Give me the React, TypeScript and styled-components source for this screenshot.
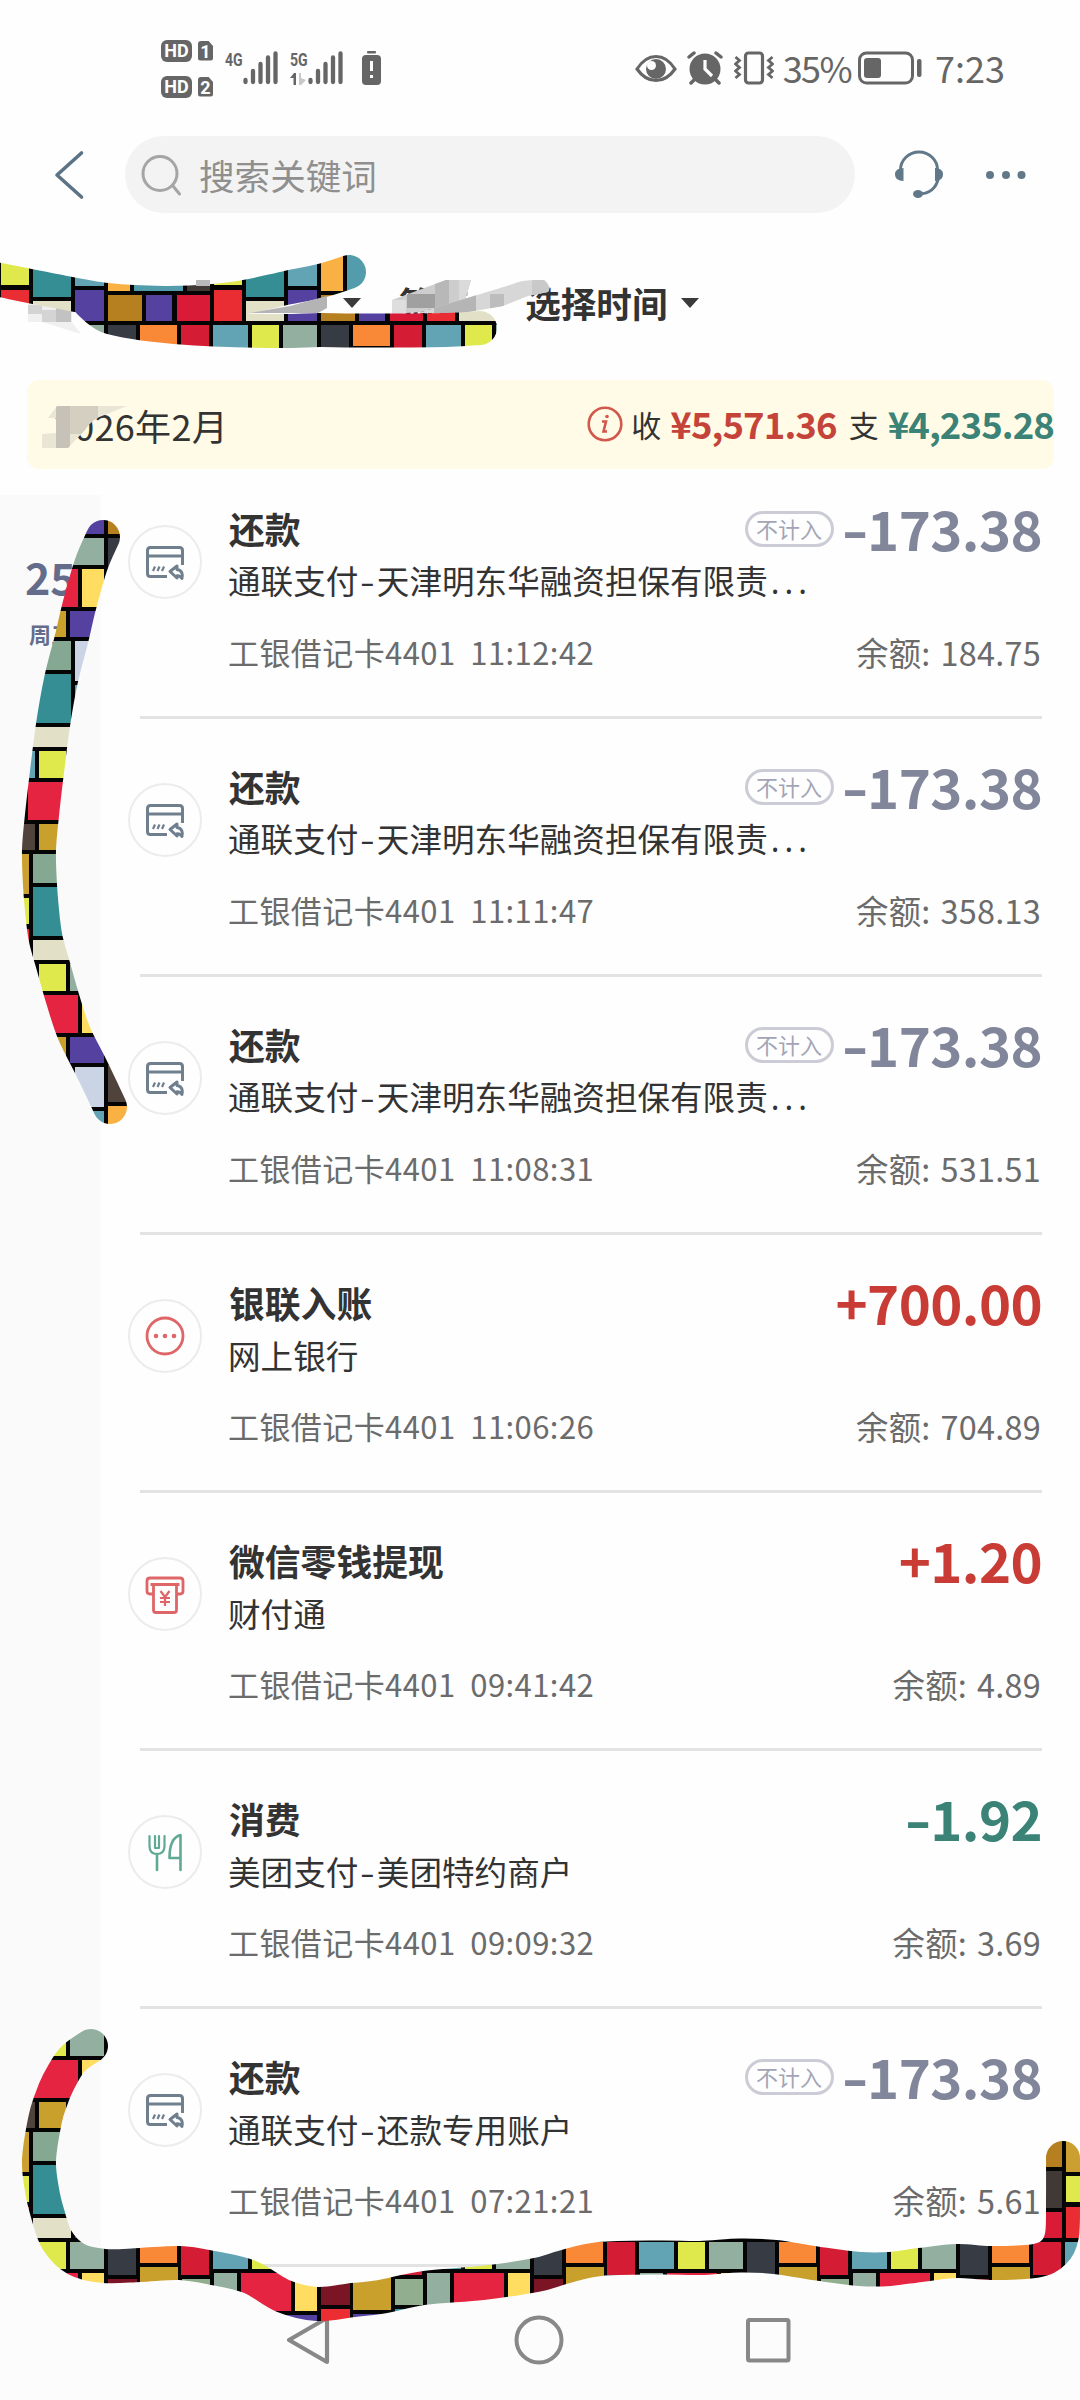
import React from "react";
import styled, { createGlobalStyle } from "styled-components";

const GlobalStyle = createGlobalStyle`
  body { margin: 0; background: #fefefe; }
  * { box-sizing: border-box; }
  svg { display: block; flex: none; }
`;

const Page = styled.div`
  position: relative;
  width: 1080px;
  height: 2400px;
  overflow: hidden;
  display: flex;
  flex-direction: column;
  background: #fefefe;
  color: #333;
  font-family: "Noto Sans CJK SC", "Noto Sans", sans-serif;
  white-space: nowrap;
`;

/* ---------- status bar ---------- */
const StatusBar = styled.header`
  height: 136px;
  padding: 0 76px 0 161px;
  display: flex;
  align-items: center;
  justify-content: space-between;
  color: #666;
`;
const StatusGroup = styled.div`
  display: flex;
  align-items: center;
`;
const HdColumn = styled.div`
  display: grid;
  gap: 14px;
  margin-right: 12px;
  margin-top: 1px;
`;
const HdRow = styled.div`
  display: flex;
  align-items: center;
  gap: 6px;
`;
const HdBadge = styled.span`
  width: 31px;
  height: 22px;
  border-radius: 6px;
  background: #666;
  color: #fff;
  font: bold 18px/22px Roboto, sans-serif;
  text-align: center;
`;
const SimBadge = styled.span`
  width: 15px;
  height: 20px;
  background: #666;
  color: #fff;
  font: bold 18px/21px Roboto, sans-serif;
  text-align: center;
  border-radius: 3px;
  clip-path: polygon(0 0, 68% 0, 100% 28%, 100% 100%, 0 100%);
`;
const Signal = styled.div<{ $gap: number }>`
  display: flex;
  height: 34px;
  margin-right: ${(p) => p.$gap}px;
`;
const NetLabel = styled.div`
  width: 18px;
  height: 34px;
  display: flex;
  flex-direction: column;
  justify-content: space-between;
  font: bold 19px/17px Roboto, "Noto Sans CJK SC", sans-serif;
`;
const NetText = styled.span`
  display: block;
  transform: scaleX(0.74);
  transform-origin: 0 0;
`;
const StatusText = styled.span<{ $left: number; $right: number; $track: number }>`
  font-size: 36px;
  line-height: 50px;
  letter-spacing: ${(p) => p.$track}px;
  margin: -2px ${(p) => p.$right}px 0 ${(p) => p.$left}px;
`;

/* ---------- search row ---------- */
const SearchRow = styled.div`
  height: 77px;
  padding: 0 53px 0 52px;
  display: flex;
  align-items: center;
`;
const SearchBox = styled.div`
  width: 730px;
  height: 77px;
  margin: 0 39px 0 39px;
  padding-left: 16px;
  border-radius: 39px;
  background: #f3f3f3;
  display: flex;
  align-items: center;
  gap: 16px;
  font-size: 35.6px;
  color: #8f8f8f;
`;

/* ---------- filters ---------- */
const Filters = styled.nav`
  height: 167px;
  padding: 56px 0 0 343px;
  display: flex;
  align-items: flex-start;
`;
const Filter = styled.div<{ $right: number }>`
  display: flex;
  align-items: center;
  gap: 14px;
  height: 66px;
  margin-right: ${(p) => p.$right}px;
  font-size: 35.6px;
  font-weight: 700;
`;
const Caret = styled.i`
  width: 0;
  height: 0;
  margin-top: 2px;
  border: solid transparent;
  border-width: 10px 9px 0;
  border-top-color: #3a3a3a;
`;

/* ---------- monthly summary ---------- */
const Summary = styled.section`
  height: 89px;
  margin-left: 27px;
  width: 1027px;
  padding-left: 27px;
  border-radius: 12px;
  background: #fffbe6;
  display: flex;
  align-items: center;
  justify-content: space-between;
`;
const Month = styled.span`
  font-size: 36px;
  letter-spacing: 0.3px;
`;
const Totals = styled.div`
  display: flex;
  align-items: center;
  margin-top: -1px;
`;
const TotalLabel = styled.span`
  font-size: 30px;
  margin: 0 9px 0 8px;
`;
const Total = styled.b<{ $color: string; $right?: number }>`
  font-size: 36.5px;
  line-height: 50px;
  letter-spacing: -0.9px;
  margin-right: ${(p) => p.$right ?? 0}px;
  color: ${(p) => p.$color};
`;

/* ---------- transactions ---------- */
const Body = styled.main`
  height: 1811px;
  display: flex;
`;
const DayColumn = styled.aside`
  width: 101px;
  margin-top: 26px;
  padding: 54px 0 0 25px;
  background: #fafafa;
  color: #646c8b;
  font-weight: 700;
`;
const Day = styled.div`
  font-size: 43px;
  line-height: 54px;
`;
const Weekday = styled.div`
  font-size: 22px;
  line-height: 32px;
  margin: 14px 0 0 4px;
`;
const List = styled.div`
  flex: 1;
  margin-top: -8px;
  padding: 0 39px 0 27px;
`;
const Row = styled.article`
  position: relative;
  height: 258px;
  display: flex;
`;
const Divider = styled.div`
  position: absolute;
  left: 12px;
  right: -1px;
  bottom: 0;
  height: 3px;
  background: #e3e3e3;
`;
const IconRing = styled.div`
  width: 74px;
  height: 74px;
  margin: 64px 26px 0 0;
  border: 2.5px solid #ececec;
  border-radius: 50%;
  display: grid;
  place-items: center;
  flex: none;
`;
const Details = styled.div`
  flex: 1;
  display: flex;
  flex-direction: column;
`;
const Line = styled.div<{ $top: number; $height: number }>`
  display: flex;
  justify-content: space-between;
  align-items: center;
  margin-top: ${(p) => p.$top}px;
  height: ${(p) => p.$height}px;
`;
const Title = styled.h3`
  margin: 0 0 0 1px;
  font-size: 35.8px;
  font-weight: 700;
`;
const AmountBox = styled.div`
  display: flex;
  align-items: center;
  gap: 9px;
`;
const Tag = styled.span`
  width: 89px;
  height: 36px;
  margin-top: 2px;
  border: 3px solid #cbccd6;
  border-radius: 18px;
  font-size: 22px;
  line-height: 29px;
  text-align: center;
  color: #a3a5b6;
`;
const Amount = styled.b<{ $color: string }>`
  font-size: 54.5px;
  line-height: 60px;
  letter-spacing: -0.6px;
  margin-right: -1px;
  color: ${(p) => p.$color};
`;
const Sign = styled.span<{ $minus: boolean }>`
  display: inline-block;
  transform: ${(p) => (p.$minus ? "scaleX(1.35)" : "none")};
  transform-origin: 50% 50%;
  margin: ${(p) => (p.$minus ? "0 3px 0 2px" : "0")};
`;
const Party = styled.span`
  font-size: 32.6px;
`;
const Dash = styled.span`
  display: inline-block;
  width: 18.5px;
  text-align: center;
  transform: scaleX(1.3);
`;
const Ellipsis = styled.span`
  font-family: "Noto Sans", sans-serif;
  letter-spacing: 5px;
  margin-left: 3px;
`;
const Account = styled.span`
  font-size: 31px;
  letter-spacing: 0.42px;
  color: #6b6b6b;
  white-space: pre;
`;
const Balance = styled.span`
  font-size: 32.4px;
  letter-spacing: 0.25px;
  word-spacing: 2.5px;
  color: #6b6b6b;
`;

/* ---------- system navigation ---------- */
const NavBar = styled.footer`
  height: 120px;
  padding-left: 284px;
  background: #fcfcfc;
  display: flex;
  align-items: center;
`;
const NavButton = styled.div<{ $right: number }>`
  margin-right: ${(p) => p.$right}px;
`;

const DoodleLayer = styled.svg`
  position: absolute;
  left: 0;
  top: 0;
  pointer-events: none;
`;

const RED = "#c83c35";
const GREEN = "#3b8277";
const GREY = "#82869a";

type IconKind = "card" | "dots" | "atm" | "food";

function RowIcon({ kind }: { kind: IconKind }) {
  if (kind === "card")
    return (
      <svg width="44" height="44" viewBox="0 0 44 44" fill="none" stroke="#6f7f8e" strokeWidth="3">
        <path d="M39.500 25V10.500q0-3-3-3H7.500q-3 0-3 3v23q0 3 3 3h16.500M4.500 16h35" />
        <path d="M10 31l2-4.500M14.500 31l2-4.500M19 31l2-4.500" strokeWidth="2.200" />
        <path d="M27 31.500l7-5.500v3.500c5 .5 6 5 5 9-1.500-2.500-3-3-5-2.800V38z" strokeLinejoin="round" />
      </svg>
    );
  if (kind === "dots")
    return (
      <svg width="44" height="44" viewBox="0 0 44 44" fill="#df6668">
        <circle cx="22" cy="22" r="18" fill="none" stroke="#df6668" strokeWidth="2.800" />
        <circle cx="13" cy="22" r="2.300" />
        <circle cx="22" cy="22" r="2.300" />
        <circle cx="31" cy="22" r="2.300" />
      </svg>
    );
  if (kind === "atm")
    return (
      <svg width="44" height="44" viewBox="0 0 44 44" fill="none" stroke="#df6668" strokeWidth="2.800" strokeLinejoin="round">
        <path d="M10 22H7q-3 0-3-3V9q0-3 3-3h30q3 0 3 3v10q0 3-3 3h-3M7.500 12.500h29" />
        <path d="M10.500 13v25q0 2.500 2.500 2.500h18q2.500 0 2.500-2.500V13" />
        <path d="M17.500 19l4.500 6 4.500-6M22 25v9M17 26h10M17 30h10" strokeWidth="2.200" />
      </svg>
    );
  return (
    <svg width="44" height="44" viewBox="0 0 44 44" fill="none" stroke="#5fa995" strokeWidth="2.600" strokeLinecap="round" strokeLinejoin="round">
      <path d="M6.500 6v10q0 8 7.500 8t7.500-8V6M12 6v12h4V6" strokeWidth="2.200" />
      <path d="M14 24v16M37.500 40V5c-8 2-11 11-11 23h11" />
    </svg>
  );
}

interface Tx {
  icon: IconKind;
  title: string;
  party: string;
  more?: boolean;
  time: string;
  amount: string;
  balance: string;
  color: string;
  excluded?: boolean;
}

const LONG = "通联支付-天津明东华融资担保有限责";
const rows: Tx[] = [
  { icon: "card", title: "还款", party: LONG, more: true, time: "11:12:42", amount: "-173.38", balance: "184.75", color: GREY, excluded: true },
  { icon: "card", title: "还款", party: LONG, more: true, time: "11:11:47", amount: "-173.38", balance: "358.13", color: GREY, excluded: true },
  { icon: "card", title: "还款", party: LONG, more: true, time: "11:08:31", amount: "-173.38", balance: "531.51", color: GREY, excluded: true },
  { icon: "dots", title: "银联入账", party: "网上银行", time: "11:06:26", amount: "+700.00", balance: "704.89", color: RED },
  { icon: "atm", title: "微信零钱提现", party: "财付通", time: "09:41:42", amount: "+1.20", balance: "4.89", color: RED },
  { icon: "food", title: "消费", party: "美团支付-美团特约商户", time: "09:09:32", amount: "-1.92", balance: "3.69", color: GREEN },
  { icon: "card", title: "还款", party: "通联支付-还款专用账户", time: "07:21:21", amount: "-173.38", balance: "5.61", color: GREY, excluded: true },
];

function Transaction({ tx }: { tx: Tx }) {
  const [channel, merchant] = tx.party.split("-");
  return (
    <Row>
      <IconRing>
        <RowIcon kind={tx.icon} />
      </IconRing>
      <Details>
        <Line $top={37} $height={60}>
          <Title>{tx.title}</Title>
          <AmountBox>
            {tx.excluded && <Tag>不计入</Tag>}
            <Amount $color={tx.color}>
              <Sign $minus={tx.amount[0] === "-"}>{tx.amount[0]}</Sign>
              {tx.amount.slice(1)}
            </Amount>
          </AmountBox>
        </Line>
        <Line $top={-1} $height={46}>
          <Party>
            {channel}
            {merchant && <Dash>-</Dash>}
            {merchant}
            {tx.more && <Ellipsis>...</Ellipsis>}
          </Party>
        </Line>
        <Line $top={25} $height={46}>
          <Account>{"工银借记卡4401  " + tx.time}</Account>
          <Balance>余额: {tx.balance}</Balance>
        </Line>
      </Details>
      <Divider />
    </Row>
  );
}

function SignalBars() {
  const tops = [27, 20, 13, 6.5, 2.5];
  return (
    <svg width="35" height="34" viewBox="0 0 35 34" stroke="#666" strokeWidth="4.300" strokeLinecap="round">
      {tops.map((t, i) => (
        <path key={i} d={`M${2.5 + i * 7.5} ${t + (i === 0 ? 2 : 0)}V31`} />
      ))}
    </svg>
  );
}

/* One repeat of the mosaic brush: [x, y, width, height, colour] on a 213 px square. */
const tiles: [number, number, number, number, string][] = [
  [1, 0, 28, 33, "#373c44"], [33, 0, 37, 21, "#f98937"], [74, 0, 28, 33, "#d41c34"],
  [106, 0, 35, 27, "#62a4b4"], [145, 0, 27, 27, "#dfe94b"], [176, 0, 34, 27, "#93af9f"],
  [33, 25, 38, 43, "#c9a02b"], [1, 37, 29, 26, "#7b1425"], [75, 37, 28, 26, "#91ae8e"],
  [107, 31, 23, 38, "#93af9f"], [134, 31, 50, 38, "#e42441"], [188, 31, 22, 38, "#ffdd61"],
  [1, 67, 29, 30, "#ec2d31"], [33, 72, 38, 35, "#5541a0"], [75, 67, 28, 41, "#4296a7"],
  [107, 73, 34, 26, "#50433b"], [145, 73, 27, 26, "#c9a02b"], [176, 73, 34, 26, "#5541a0"],
  [1, 101, 32, 37, "#50433b"], [37, 111, 66, 27, "#b67f20"],
  [107, 103, 28, 40, "#cca030"], [139, 103, 38, 29, "#84a892"], [181, 103, 29, 40, "#cad4e4"],
  [1, 142, 22, 37, "#f9b144"], [27, 142, 49, 37, "#539cab"], [80, 142, 23, 37, "#403935"],
  [107, 147, 28, 26, "#dfe94b"], [139, 136, 38, 49, "#348e93"], [181, 147, 29, 27, "#62a4b4"],
  [1, 183, 34, 26, "#b67f20"], [39, 183, 26, 26, "#5541a0"], [70, 183, 33, 26, "#da1b38"],
  [107, 178, 28, 31, "#ea2d33"], [139, 189, 38, 20, "#e2e0c7"], [181, 178, 29, 31, "#5541a0"],
];

/* The brush tile starts at (107, 112); the second stroke is painted with it as well. */
function smooth(points: [number, number][]) {
  let d = `M${points[0][0]} ${points[0][1]}`;
  for (let i = 0; i < points.length - 1; i++) {
    const a = points[i - 1] ?? points[i];
    const b = points[i];
    const c = points[i + 1];
    const e = points[i + 2] ?? c;
    d += `C${b[0] + (c[0] - a[0]) / 6} ${b[1] + (c[1] - a[1]) / 6} ${c[0] - (e[0] - b[0]) / 6} ${c[1] - (e[1] - b[1]) / 6} ${c[0]} ${c[1]}`;
  }
  return d;
}

const strokes: [number, number][][] = [
  [[-20, 276], [0, 280], [50, 290], [107, 300], [164, 303], [214, 301], [250, 296], [286, 288], [320, 281], [349, 272]],
  [[90, 303], [107, 316], [139, 323], [175, 327], [214, 329.5], [280, 331], [320, 330], [357, 330.5], [446, 330], [480, 328]],
  [[103, 537], [91, 565], [79, 607], [72, 637], [61, 680], [53, 725], [46, 780], [42, 815], [39, 850], [40, 885], [43, 920], [46, 940], [53, 965], [63, 1000], [74, 1033], [91, 1067], [103, 1092], [110, 1107]],
  [[91, 2046], [72, 2060], [58, 2083], [51, 2100], [45, 2120], [39, 2160], [42, 2190], [48, 2215], [57, 2240], [76, 2259], [104, 2266], [140, 2265], [180, 2263], [213, 2268], [250, 2277], [283, 2296], [317, 2304], [353, 2300], [380, 2297], [424, 2288], [482, 2283], [536, 2275], [564, 2267], [600, 2259], [660, 2257.5], [700, 2258], [740, 2255.5], [775, 2257], [820, 2264], [860, 2269], [890, 2269], [920, 2265], [957, 2261], [990, 2263], [1035, 2261], [1054, 2252], [1062, 2235], [1063, 2200], [1063, 2158]],
];

function Doodles() {
  return (
    <DoodleLayer width="1080" height="2400" viewBox="0 0 1080 2400">
      <defs>
        <pattern id="mosaic" x="107" y="112" width="213" height="213" patternUnits="userSpaceOnUse">
          <rect width="213" height="213" fill="#050505" />
          {tiles.map(([x, y, w, h, c], i) => (
            <rect key={i} x={x} y={y} width={w} height={h} fill={c} />
          ))}
        </pattern>
        <clipPath id="smearA"><path d="M392 300L446 280h25l-6 20-44 12-29 2z" /></clipPath>
        <clipPath id="smearB"><path d="M418 313l95-29q8-4 24-4h7q8 7 4 12l-20 4-25 10-40 7z" /></clipPath>
        <clipPath id="smearC"><path d="M48 418l9-12h70l-20 8q-16 5-22 16l-17 18H42v-14l14-1V418z" /></clipPath>
      </defs>
      <g>
        <path d="M28 302h20l24 6v14l9 12-39-12H28z" fill="#f0f0f0" />
        <path d="M28 305h14v9H28z" fill="#d4d4d4" />
        <path d="M42 310h14v12H42z" fill="#d4d4d4" />
        <path d="M56 308h15v14H56z" fill="#c2c2c2" />
        <g clipPath="url(#smearA)">
          <rect x="390" y="278" width="84" height="38" fill="#cdcdcd" />
          <rect x="407" y="294" width="28" height="14" fill="#a0a0a0" />
          <rect x="435" y="280" width="14" height="34" fill="#b8b8b8" />
          <rect x="392" y="300" width="14" height="14" fill="#dedede" />
          <rect x="459" y="280" width="12" height="34" fill="#dadada" />
        </g>
        <g clipPath="url(#smearB)">
          <rect x="410" y="276" width="142" height="40" fill="#d7d7d7" />
          <rect x="434" y="294" width="42" height="20" fill="#b5b5b5" />
          <rect x="490" y="294" width="14" height="16" fill="#bdbdbd" />
          <rect x="532" y="280" width="18" height="18" fill="#c9c9c9" />
        </g>
        <g clipPath="url(#smearC)">
          <rect x="40" y="404" width="90" height="46" fill="#eae6d5" />
          <rect x="56" y="406" width="14" height="44" fill="#c6c2b8" />
          <rect x="70" y="406" width="28" height="28" fill="#d4cfc0" />
        </g>
      </g>
      {strokes.map((s, i) => (
        <path key={i} d={smooth(s)} fill="none" stroke="url(#mosaic)" strokeWidth="34" strokeLinecap="round" strokeLinejoin="round" />
      ))}
      <path d="M250 313l40-7 37-10v12l-9 5z" fill="#b4b4b4" />
      <path d="M196 280h14v6h-14z" fill="#b9b9b9" />
    </DoodleLayer>
  );
}

export default function App() {
  return (
    <Page>
      <GlobalStyle />
      <StatusBar>
        <StatusGroup>
          <HdColumn>
            <HdRow><HdBadge>HD</HdBadge><SimBadge>1</SimBadge></HdRow>
            <HdRow><HdBadge>HD</HdBadge><SimBadge>2</SimBadge></HdRow>
          </HdColumn>
          <Signal $gap={12}>
            <NetLabel><NetText>4G</NetText></NetLabel>
            <SignalBars />
          </Signal>
          <Signal $gap={19}>
            <NetLabel>
              <NetText>5G</NetText>
              <svg width="17" height="12" viewBox="0 0 17 12">
                <path d="M0 5L4 0h2v12H3.500V5z" fill="#666" />
                <path d="M9 0h2v5l5 2-5 5H9z" fill="#c8c8c8" />
              </svg>
            </NetLabel>
            <SignalBars />
          </Signal>
          <svg width="19" height="34" viewBox="0 0 19 34">
            <rect x="5" y="0" width="9" height="2.500" rx="1" fill="#666" />
            <rect x="0" y="4" width="19" height="30" rx="4" fill="#666" />
            <path d="M9.500 10v10M9.500 24v3" stroke="#fff" strokeWidth="3" />
          </svg>
        </StatusGroup>
        <StatusGroup>
          <svg width="42" height="34" viewBox="0 0 42 34">
            <path d="M2 18Q10 5.500 21 5.500T40 18Q32 29.500 21 29.500T2 18z" fill="none" stroke="#666" strokeWidth="3.200" />
            <circle cx="21" cy="18" r="10" fill="#666" />
            <circle cx="16.500" cy="14.500" r="4.500" fill="#fefefe" />
          </svg>
          <svg width="38" height="34" viewBox="0 0 38 34" style={{ marginLeft: 9 }}>
            <circle cx="19" cy="18" r="15.500" fill="#666" />
            <path d="M3 6l5-4M35 6l-5-4M5 32l4-4M33 32l-4-4" stroke="#666" strokeWidth="3.500" strokeLinecap="round" />
            <path d="M19 9v9l7 7" fill="none" stroke="#fff" strokeWidth="3.200" />
          </svg>
          <svg width="40" height="34" viewBox="0 0 40 34" fill="none" stroke="#666" strokeWidth="3.200" style={{ marginLeft: 10 }}>
            <rect x="11.500" y="2" width="17" height="30" rx="3" />
            <path d="M1.500 6l4 3.500-4 3.500 4 3.500-4 3.500 4 3.500-4 3.500M38.500 6l-4 3.500 4 3.500-4 3.500 4 3.500-4 3.500 4 3.500" strokeWidth="2.800" />
          </svg>
          <StatusText $left={9} $right={7} $track={-1.6}>35%</StatusText>
          <svg width="64" height="34" viewBox="0 0 64 34">
            <rect x="1.500" y="2" width="53" height="30" rx="7" fill="none" stroke="#666" strokeWidth="3" />
            <rect x="6" y="7" width="17" height="20" rx="3" fill="#666" />
            <rect x="59" y="8" width="4.500" height="18" rx="2" fill="#666" />
          </svg>
          <StatusText $left={13} $right={-1} $track={0}>7:23</StatusText>
        </StatusGroup>
      </StatusBar>

      <SearchRow>
        <svg width="34" height="52" viewBox="0 0 34 52">
          <path d="M29.500 4L5 26 29.500 48" fill="none" stroke="#5c7386" strokeWidth="3.600" strokeLinecap="round" strokeLinejoin="round" />
        </svg>
        <SearchBox>
          <svg width="42" height="44" viewBox="0 0 42 44" fill="none" stroke="#a5a5a5" strokeWidth="3" strokeLinecap="round">
            <circle cx="19" cy="20.500" r="17" />
            <path d="M32 33l6.500 8" />
          </svg>
          搜索关键词
        </SearchBox>
        <svg width="50" height="50" viewBox="0 0 50 50">
          <path d="M6.500 20a18.500 18 0 0 1 37 0M44.500 28Q41 43.500 25 44" fill="none" stroke="#617889" strokeWidth="3" />
          <path d="M9.500 18v13Q1 31 1 24.500T9.500 18zM41 18v13Q49 31 49 24.500T41 18z" fill="#617889" />
          <ellipse cx="24" cy="44" rx="5" ry="4" fill="#617889" />
        </svg>
        <svg width="42" height="10" viewBox="0 0 42 10" fill="#617889" style={{ marginLeft: 41 }}>
          <circle cx="5" cy="5" r="4" />
          <circle cx="21" cy="5" r="4" />
          <circle cx="36.500" cy="5" r="4" />
        </svg>
      </SearchRow>

      <Filters>
        <Filter $right={38}><Caret /></Filter>
        <Filter $right={55}>筛选</Filter>
        <Filter $right={0}>选择时间<Caret /></Filter>
      </Filters>

      <Summary>
        <Month>2026年2月</Month>
        <Totals>
          <svg width="36" height="36" viewBox="0 0 36 36" fill="none" stroke="#d2574c">
            <circle cx="18" cy="18" r="16.300" strokeWidth="2.600" />
            <path d="M15 15.500h4l-2.500 10h3.500" strokeWidth="2.600" />
            <circle cx="20" cy="10.500" r="1.800" fill="#d2574c" stroke="none" />
          </svg>
          <TotalLabel>收</TotalLabel>
          <Total $color="#c5443a" $right={4}>¥5,571.36</Total>
          <TotalLabel>支</TotalLabel>
          <Total $color={GREEN}>¥4,235.28</Total>
        </Totals>
      </Summary>

      <Body>
        <DayColumn>
          <Day>25</Day>
          <Weekday>周三</Weekday>
        </DayColumn>
        <List>
          {rows.map((tx) => (
            <Transaction key={tx.time} tx={tx} />
          ))}
        </List>
      </Body>

      <NavBar>
        <NavButton $right={184}>
          <svg width="46" height="52" viewBox="0 0 46 52" fill="none" stroke="#888" strokeWidth="4.200" strokeLinejoin="round">
            <path d="M5 26L43 4v44z" />
          </svg>
        </NavButton>
        <NavButton $right={181}>
          <svg width="50" height="50" viewBox="0 0 50 50" fill="none" stroke="#888" strokeWidth="4">
            <circle cx="25" cy="25" r="22.500" />
          </svg>
        </NavButton>
        <NavButton $right={0}>
          <svg width="46" height="46" viewBox="0 0 46 46" fill="none" stroke="#888" strokeWidth="4">
            <rect x="3" y="3" width="40.500" height="40.500" rx="1.500" />
          </svg>
        </NavButton>
      </NavBar>
      <Doodles />
    </Page>
  );
}
